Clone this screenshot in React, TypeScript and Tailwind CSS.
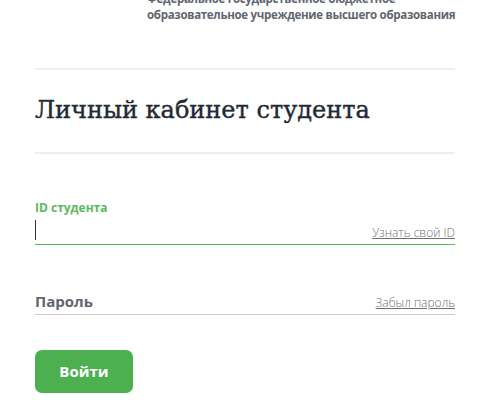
export default function App() {
  return (
    <div className="w-[488px] h-[400px] overflow-hidden bg-white font-['Open_Sans',sans-serif]">
      <div className="pl-[147px] mt-[-9px] text-[11.5px] leading-[15.5px] font-bold tracking-[-0.3px] text-[#5f6670]">
        Федеральное государственное бюджетное
        <br />
        образовательное учреждение высшего образования
      </div>
      <div className="ml-[35px] w-[420px]">
        <div className="mt-[46px] h-[2px] bg-[#efefef]" />
        <h1 className="mt-[25px] font-['DejaVu_Serif',serif] text-[24px] leading-[30px] text-[#1f2a33] [-webkit-text-stroke:0.4px_#1f2a33]">
          Личный кабинет студента
        </h1>
        <div className="mt-[27px] h-[2px] bg-[#efefef]" />
        <div className="mt-[46px] text-[12px] leading-[16px] font-bold text-[#5cb85c]">ID студента</div>
        <div className="flex h-[29px] items-end justify-between border-b border-[#5cb85c] pb-[4px]">
          <div className="h-[20px] w-px bg-[#333]" />
          <a className="text-[12px] leading-[14px] font-light text-[#707070] underline">Узнать свой ID</a>
        </div>
        <div className="mt-[45px] flex h-[25px] items-end justify-between border-b border-[#cccccc] pb-[4px]">
          <span className="text-[15px] leading-[18px] font-bold text-[#5f6670]">Пароль</span>
          <a className="text-[12px] leading-[14px] font-light text-[#707070] underline">Забыл пароль</a>
        </div>
        <button className="mt-[35px] flex h-[43px] w-[98px] items-center justify-center rounded-[7px] bg-[#4caf50] text-[15px] font-bold text-white">
          Войти
        </button>
      </div>
    </div>
  );
}
